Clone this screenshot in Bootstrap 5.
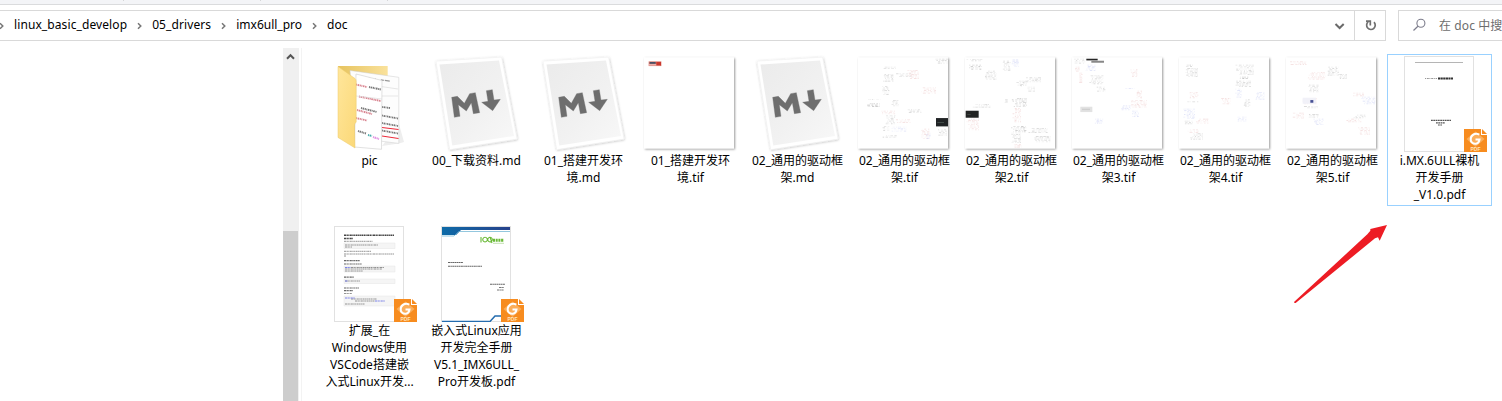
<!DOCTYPE html>
<html lang="zh-CN">
<head>
<meta charset="utf-8">
<meta name="viewport" content="width=device-width, initial-scale=1">
<title>doc</title>
<link href="https://cdn.jsdelivr.net/npm/bootstrap@5.3.0/dist/css/bootstrap.min.css" rel="stylesheet">
<style>
body{font:12px/17px "Noto Sans","Noto Sans CJK SC",sans-serif;color:#000;background:#fff;height:401px}
svg{display:block;flex:none}
.ribbon-edge{height:5px;background:#f3f4f7;border-bottom:1px solid #dadbdd}
.ribbon-edge i{width:1px;height:1px;background:#d5d6d8}
.address-row{height:31px;margin-top:5px}
.address-box,.search-box{border:1px solid #d9d9d9}
.address-box{width:1386px;border-left:0}
.search-box{width:140px;margin-left:12px;color:#6d6d6d;white-space:nowrap}
.refresh-btn{width:31px;border-left:1px solid #d9d9d9}
.crumb{white-space:nowrap;padding-bottom:2px}
.c1{letter-spacing:.1px}
.c2{letter-spacing:.1px}
.hint{letter-spacing:.1px}
.tree-pane{width:302px;border-right:1px solid #f3f3f3}
.scroll-track{width:16px;margin-right:2px;background:#f0f0f0}
.scroll-thumb{width:15px;background:#cdcdcd}
.file-grid{display:grid;grid-template-columns:repeat(11,105px);grid-auto-rows:170px;column-gap:2px;padding:6px 0 0 15px;align-items:start}
.file-tile{border:1px solid transparent;padding-bottom:2px}
.file-tile.selected{border-color:#99d1ff}
.file-tile span{display:block;text-align:center;white-space:nowrap}
.pointer-arrow{left:1280px;top:215px;pointer-events:none}
</style>
</head>
<body class="overflow-hidden d-flex flex-column position-relative">
<svg width="0" height="0" class="position-absolute" aria-hidden="true">
<defs>
<linearGradient id="gPaper" x1="0" y1="0" x2="1" y2="1"><stop offset="0" stop-color="#ebebeb"/><stop offset=".55" stop-color="#f1f1f1"/><stop offset="1" stop-color="#f8f8f8"/></linearGradient>
<linearGradient id="gFold" x1="0" y1="0" x2="1" y2="1"><stop offset="0" stop-color="#ffe69b"/><stop offset="1" stop-color="#fbd877"/></linearGradient>
<linearGradient id="gBack" x1="0" x2="1"><stop offset="0" stop-color="#e6c35e"/><stop offset="1" stop-color="#fae29c"/></linearGradient>
<linearGradient id="gBlue" x1="0" x2="1"><stop offset="0" stop-color="#0e6ba8"/><stop offset="1" stop-color="#27418b"/></linearGradient>
<filter id="shade" x="-10%" y="-10%" width="125%" height="125%"><feDropShadow dx="1" dy="1" stdDeviation=".8" flood-opacity=".4"/></filter>
<filter id="paperShade" x="-10%" y="-10%" width="125%" height="125%"><feDropShadow dx=".4" dy=".6" stdDeviation=".9" flood-opacity=".28"/></filter>
<symbol id="md" viewBox="1 1 103 97">
<path d="M12 7.2 77.5 3.2 93 85 25.7 95.6Z" fill="#fff" stroke="#f0f0f0" stroke-width=".5" filter="url(#paperShade)"/>
<path d="M15.5 10.5 75 6.5 90 82 28.3 91.5Z" fill="url(#gPaper)"/>
<g transform="translate(-104 -4) scale(.33333)" fill="#6e6e6e" stroke="#6e6e6e"><path d="M395 142 412 139 433 160 449 131 466 128 479 188 460 191 454 158 439 183 415 164 420 199 403 202Z"/><path d="M499 122 517 119 522 150 541 148 518 182 485 157 504 154Z"/></g>
</symbol>
<symbol id="badge" viewBox="0 0 23 23">
<path d="M0 0H17V6H23V23H0Z" fill="#f78c1f"/><path d="M18 0 23 5H18Z" fill="#f78c1f"/>
<path d="M11.5 2.5 20.5 10 11.5 18 2.5 10Z" fill="#fbae5a"/>
<path d="M15.4 5.6C11 3.7 7 5.8 6.7 10c-.2 3.4 2.5 5.2 5.2 4.8 2-.3 3.2-1.8 3.6-4.3h-4" fill="none" stroke="#fff" stroke-width="2"/>
<text x="11.5" y="21.7" text-anchor="middle" font-family="Liberation Sans,sans-serif" font-size="5" font-weight="700" fill="#ffe3bd" textLength="10">PDF</text>
</symbol>
</defs>
</svg>

<div class="ribbon-edge d-flex flex-shrink-0"><i style="margin-left:123px"></i><i style="margin-left:136px"></i><i style="margin-left:126px"></i></div>
<div class="address-row d-flex flex-shrink-0">
  <div class="address-box d-flex flex-shrink-0">
    <div class="d-flex align-items-center flex-grow-1">
      <svg width="14" height="12"><path d="M0 3.2 2.8 6 0 8.8" fill="none" stroke="#767676" stroke-width="1.5"/></svg>
      <span class="crumb c1">linux_basic_develop</span>
      <svg width="25" height="12"><path d="M11 3.2 13.8 6 11 8.8" fill="none" stroke="#767676" stroke-width="1.5"/></svg>
      <span class="crumb c2">05_drivers</span>
      <svg width="25" height="12"><path d="M11 3.2 13.8 6 11 8.8" fill="none" stroke="#767676" stroke-width="1.5"/></svg>
      <span class="crumb c3">imx6ull_pro</span>
      <svg width="25" height="12"><path d="M11 3.2 13.8 6 11 8.8" fill="none" stroke="#767676" stroke-width="1.5"/></svg>
      <span class="crumb c4">doc</span>
    </div>
    <svg width="30" height="29"><path d="M11.5 13 15.6 17 19.7 13" fill="none" stroke="#6a6a6a" stroke-width="2"/></svg>
    <div class="refresh-btn"><svg width="29" height="29"><path d="M19 11.2a4.3 4.3 0 1 1-5.8-.3M11 10.2h4.3v4.2" fill="none" stroke="#707070" stroke-width="1.7"/></svg></div>
  </div>
  <div class="search-box d-flex align-items-center flex-shrink-0">
    <svg width="40" height="29"><circle cx="21.9" cy="12.3" r="4" fill="none" stroke="#7d7d8c" stroke-width="1.1"/><path d="M18.9 15.3 14.5 19.5" stroke="#7d7d8c" stroke-width="1.2"/></svg>
    <span class="hint">在 doc 中搜索</span>
  </div>
</div>

<div class="d-flex flex-grow-1" style="margin-top:7px">
  <div class="tree-pane d-flex justify-content-end flex-shrink-0">
    <div class="scroll-track d-flex flex-column">
      <svg width="16" height="183"><path d="M4 10.7 7.5 7.2 11 10.7" fill="none" stroke="#555" stroke-width="2"/></svg>
      <div class="scroll-thumb flex-grow-1"></div>
    </div>
  </div>
  <div class="file-grid">
    <div class="file-tile">
      <svg width="103" height="97" viewBox="1 1 103 97">
        <path d="M21 12H70.7V80L39 92 21 83Z" fill="url(#gBack)"/>
        <path d="M65 92 82 89.5 87 88 82 70Z" fill="#eee"/>
        <path d="M33 16.5 81.8 23.3V89.4L39 84Z" fill="#fdfdfd" stroke="#ccc" stroke-width=".5"/>
        <g fill="none" stroke-width="1.3">
          <path d="M45 23.5 76 27.5" stroke="#999" stroke-dasharray="3 1 5 4 1 5"/>
          <path d="M64 32.5 81 35M64 42H81" stroke="#ddd" stroke-width=".7"/>
          <path d="M65 53 73 54M65 61.5 81 64.5M65 69 81 72M65 76.5 81 79.5" stroke="#777" stroke-width="1.8" stroke-dasharray="1 .6 1.6 .5 .8 .6"/>
          <path d="M65 73.5 81.5 75.5M65 82 81.5 84.5" stroke="#ed2939" stroke-width="1"/>
        </g>
        <path d="M39 20 65 26.5 64.5 95.3 37.5 93Z" fill="#fff" stroke="#ccc" stroke-width=".6"/>
        <g fill="none" stroke-width="1.9" stroke-dasharray="1 .6 1.6 .6 1.2 .5">
          <path d="M39 30.5 50 33M40 56 55 60M39 64 50 66.5M42 42.5 64 47" stroke="#d98490"/>
          <path d="M52 33 64 35.5M44 54 60 58M41 77 49 79.5" stroke="#777"/>
          <path d="M51 81 55 82" stroke="#4aa"/><path d="M56 83 62 85" stroke="#e090e0"/>
        </g>
        <path d="M39 42 65 45" stroke="#ddd" stroke-width=".7"/>
        <path d="M21 12.5 38 24.5Q39.2 25.5 39.2 27V68Q37 70 37.4 72L38 94 21 83.5Z" fill="url(#gFold)" stroke="#eccb6d" stroke-width=".5"/>
      </svg>
      <span>pic</span>
    </div>
    <div class="file-tile"><svg width="103" height="97"><use href="#md"/></svg><span>00_下载资料.md</span></div>
    <div class="file-tile"><svg width="103" height="97"><use href="#md"/></svg><span>01_搭建开发环</span><span>境.md</span></div>
    <div class="file-tile"><svg width="103" height="97" viewBox="1 1 103 97" data-tif="t1"></svg><span>01_搭建开发环</span><span>境.tif</span></div>
    <div class="file-tile"><svg width="103" height="97"><use href="#md"/></svg><span>02_通用的驱动框</span><span>架.md</span></div>
    <div class="file-tile"><svg width="103" height="97" viewBox="1 1 103 97" data-tif="d1"></svg><span>02_通用的驱动框</span><span>架.tif</span></div>
    <div class="file-tile"><svg width="103" height="97" viewBox="1 1 103 97" data-tif="d2"></svg><span>02_通用的驱动框</span><span>架2.tif</span></div>
    <div class="file-tile"><svg width="103" height="97" viewBox="1 1 103 97" data-tif="d3"></svg><span>02_通用的驱动框</span><span>架3.tif</span></div>
    <div class="file-tile"><svg width="103" height="97" viewBox="1 1 103 97" data-tif="d4"></svg><span>02_通用的驱动框</span><span>架4.tif</span></div>
    <div class="file-tile"><svg width="103" height="97" viewBox="1 1 103 97" data-tif="d5"></svg><span>02_通用的驱动框</span><span>架5.tif</span></div>
    <div class="file-tile selected">
      <svg width="103" height="97" viewBox="1 1 103 97">
        <rect x="17.5" y="2.5" width="69" height="95" fill="#fff" stroke="#e1e1e1"/>
        <path d="M28 8.5H76" stroke="#b5b5b5"/>
        <path d="M38 24.5H50" stroke="#999" stroke-dasharray="1 .8 2 .6"/><path d="M51 24.5H66" stroke="#333" stroke-width="2" stroke-dasharray="2.2 .4"/>
        <path d="M44 66.3H64M49 68.8H58M51 71H55" stroke="#555" stroke-width="1.2" stroke-dasharray="1.8 .5"/>
        <use href="#badge" x="77" y="75" width="23" height="23"/>
      </svg>
      <span>i.MX.6ULL裸机</span><span>开发手册</span><span>_V1.0.pdf</span>
    </div>
    <div class="file-tile">
      <svg width="103" height="97" viewBox="1 1 103 97">
        <rect x="17.5" y="2.5" width="69" height="95" fill="#fff" stroke="#e1e1e1"/>
        <g fill="#f5f5f5" stroke="#e4e4e4" stroke-width=".5"><path d="M27 19H78V24.5H27ZM27 42H78V48H27ZM27 55H78V59.5H27ZM27 72H78V82H27Z"/></g>
        <g fill="none" stroke="#444" stroke-dasharray="2 .5 1.4 .4 1 .5">
          <path d="M27 11.3H77M27 14.5H36" stroke-width="1.5"/>
          <path d="M27 17.3H56M28 21H61M28 23H35M27 27.3H54M27 30H77M27 32H29M28 45H65M28 47H46M28 57H43M27 69.5H35M34 75H60M28 80H48" stroke="#888" stroke-width=".9"/>
          <path d="M27 36.7H43M27 40H45M27 53.2H37M27 64H42M27 66.7H36" stroke-width="1.2" stroke="#666"/>
          <path d="M28 43.5H34M28 57H31M28 74H38M58 77H68" stroke="#7b82e8"/><path d="M34 43.5H67M38 77H58" stroke="#888" stroke-width=".9"/>
        </g>
        <use href="#badge" x="77" y="75" width="23" height="23"/>
      </svg>
      <span>扩展_在</span><span>Windows使用</span><span>VSCode搭建嵌</span><span>入式Linux开发...</span>
    </div>
    <div class="file-tile">
      <svg width="103" height="97" viewBox="1 1 103 97">
        <rect x="17.5" y="2.5" width="69" height="95" fill="#fff" stroke="#e1e1e1"/>
        <path d="M18 3H86V6H37L32 11H18Z" fill="url(#gBlue)"/><path d="M18 12H30L34.5 7.5H86" fill="none" stroke="#64afd0" stroke-width=".7"/>
        <path d="M18 97.5H66L71 92H86" fill="none" stroke="#246cae" stroke-width="1.5"/>
        <path d="M57 13V18.5M61 13.3a2.3 2.3 0 1 0 .1 0M66 13.3a2.3 2.3 0 1 0 .1 0L68 19" fill="none" stroke="#69b936" stroke-width="1.1"/>
        <path d="M69 16.3H80" stroke="#69b936" stroke-width="3" stroke-dasharray="2 .7"/><path d="M69 19.3H80" stroke="#9aca7b" stroke-width=".6"/>
        <g stroke="#666" stroke-width="1.1" stroke-dasharray="2 .4 1.5 .4"><path d="M24 38.5H39M24 42.2H58M66 60.2H81"/><path d="M75 63.5H80M73 66H80" stroke-width=".9"/></g>
        <use href="#badge" x="77" y="75" width="23" height="23"/>
      </svg>
      <span>嵌入式Linux应用</span><span>开发完全手册</span><span>V5.1_IMX6ULL_</span><span>Pro开发板.pdf</span>
    </div>
  </div>
</div>

<svg class="pointer-arrow position-absolute" width="120" height="95" viewBox="0 0 360 285"><path d="M42 261 262 58 271 47V42L321 30 299 77 294 67 285 70 47 264Q42 265 42 261Z" fill="#ed1c24"/></svg>

<script>
// Notes shown in each diagram preview: [x, y, width, height, colour]
const K='#888', R='#dd9c9c', B='#9ca6e8';
const notes={
 t1:[],
 d1:[[232,4,38,14,K],[70,28,44,8,K],[76,50,30,22,K],[110,48,50,12,K],[148,38,34,26,R],[70,86,24,26,K],[184,90,50,18,R],[24,125,44,3,K],[24,138,42,12,'#444'],[98,128,24,18,K],[148,156,42,10,K],[66,160,46,10,R],[78,174,34,26,K],[114,186,44,12,R],[70,206,24,14,K],[98,208,48,16,B],[74,234,42,8,K],[186,214,28,30,R],[204,226,14,18,B],[240,216,26,20,K]],
 d2:[[4,5,48,6,K],[6,22,44,14,'#555'],[60,40,34,26,K],[112,10,24,30,K],[140,6,22,24,B],[154,70,30,16,K],[164,80,10,6,'#222'],[176,60,52,16,K],[180,88,30,16,K],[22,140,54,12,K],[118,126,10,12,K],[140,122,46,26,'#666'],[142,152,26,44,R],[4,184,38,36,R],[136,206,48,18,'#555'],[188,212,60,14,K],[138,226,30,30,K],[206,236,50,18,K],[146,260,24,10,R]],
 d3:[[4,4,36,14,K],[8,28,16,14,R],[38,22,32,20,B],[20,46,12,30,R],[50,54,44,25,K],[70,88,30,14,K],[174,36,22,24,R],[158,92,30,4,B],[192,100,18,22,R],[176,128,48,22,R],[146,144,30,14,B],[180,160,20,18,B],[66,184,28,14,B]],
 d4:[[18,22,24,6,'#444'],[16,32,40,28,K],[168,22,56,30,K],[170,58,38,6,'#333'],[168,70,48,20,K],[168,94,20,26,B],[24,104,34,20,R],[18,132,40,4,K],[126,122,28,20,R],[192,126,22,22,K],[228,104,28,24,B],[12,154,36,30,B],[50,184,38,14,R],[12,190,30,12,K],[20,216,40,10,R],[32,228,40,18,K],[172,178,30,16,B]],
 d5:[[12,12,50,12,R],[124,28,34,28,K],[64,44,54,22,R],[154,50,28,16,K],[66,82,32,24,K],[50,122,42,20,R],[48,146,48,8,K],[200,106,34,10,R],[220,118,48,24,B],[20,166,34,18,R],[60,170,38,12,K],[80,184,32,20,B],[178,184,48,10,R],[200,172,38,12,K],[216,210,36,24,R]]
};
const solids={
 t1:[[14,12,38,14,'#d97469'],[17,14,18,5,'#3d5067'],[15,21,34,3,'#f5d7d5'],[37,14,14,10,'#c9372c']],
 d1:[[234,182,36,25,'#202325'],[238,194,20,2,'#53605b']],
 d2:[[2,160,39,21,'#222423'],[7,170,10,1,'#727d73']],
 d3:[[43,4,34,5,'#262626'],[58,10,38,6,'#888'],[25,148,36,16,'#e2e2e2'],[30,154,24,4,'#cfcfcf']],
 d4:[],
 d5:[[50,121,40,18,'#f1f1f8'],[73,128,9,8,'#475094']]
};
let seed=7;
const rnd=()=>(seed=(seed*16807)%2147483647)/2147483647;
document.querySelectorAll('[data-tif]').forEach(s=>{
  const id=s.dataset.tif;
  let h='<rect x="6" y="3.4" width="90" height="91" fill="#fff" filter="url(#shade)"/><g transform="translate(6 3.4) scale(.33333)">';
  notes[id].forEach(([x,y,w,t,c])=>{
    for(let j=0;j<t;j+=4){
      let a=x+rnd()*w*.35;
      while(a<x+w){
        const l=2+rnd()*7;
        h+=`<rect x="${a.toFixed(1)}" y="${y+j}" width="${Math.min(l,x+w-a).toFixed(1)}" height="2.4" fill="${c}" opacity="${(.08+rnd()*.3).toFixed(2)}"/>`;
        a+=l+1+rnd()*5;
      }
    }
  });
  solids[id].forEach(([x,y,w,t,c])=>{h+=`<rect x="${x}" y="${y}" width="${w}" height="${t}" fill="${c}"/>`});
  s.innerHTML=h+'</g>';
});
</script>
<script src="https://cdn.jsdelivr.net/npm/bootstrap@5.3.0/dist/js/bootstrap.bundle.min.js"></script>
</body>
</html>
